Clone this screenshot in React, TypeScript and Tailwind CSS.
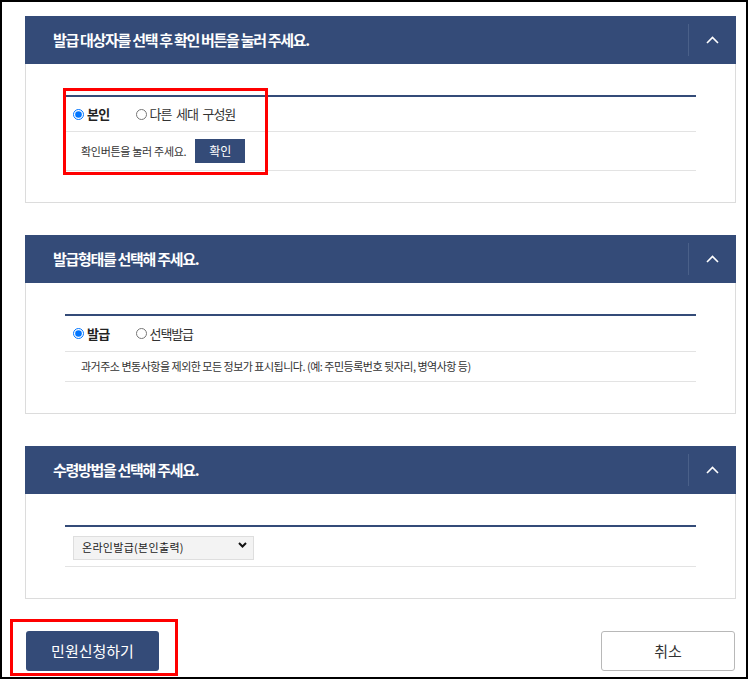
import { useState } from 'react';

const FONT = { fontFamily: '"Noto Sans CJK KR", "Noto Sans", sans-serif' };

function PanelHeader({ title }: { title: string }) {
  return (
    <div className="flex h-[48px] items-center bg-[#344b78]">
      <h2 className="flex-1 pl-[28px] text-[15px] font-bold tracking-[-1.3px] text-white">{title}</h2>
      <div className="h-[32px] w-px bg-[#4a6089]" />
      <button className="flex h-full w-[47px] items-center justify-center text-white">
        <svg width="13" height="8" viewBox="0 0 13 8" fill="none">
          <path d="M1 7L6.5 1.5L12 7" stroke="white" strokeWidth="1.6" />
        </svg>
      </button>
    </div>
  );
}

function Panel({ title, children }: { title: string; children: React.ReactNode }) {
  return (
    <section className="bg-white">
      <PanelHeader title={title} />
      <div className="border-x border-b border-[#dcdcdc] px-[39px] pt-[31px] pb-[31px]">
        <div className="border-t-2 border-[#344b78]">{children}</div>
      </div>
    </section>
  );
}

function Radio({ name, label, checked, onChange }: { name: string; label: string; checked: boolean; onChange: () => void }) {
  return (
    <label
      className={`flex items-center gap-[3px] text-[13px] ${
        checked ? 'font-bold tracking-[-0.7px] text-[#222]' : 'tracking-[-1.1px] text-[#333] [word-spacing:3px]'
      }`}
    >
      <input type="radio" name={name} checked={checked} onChange={onChange} className="m-0 h-[11px] w-[11px]" />
      {label}
    </label>
  );
}

export default function App() {
  const [target, setTarget] = useState('self');
  const [kind, setKind] = useState('all');

  return (
    <div className="relative h-[679px] w-[748px] border-2 border-black bg-white" style={FONT}>
      <div className="flex flex-col gap-[32px] pt-[14px] pl-[23px] pr-[10px]">
        <Panel title="발급 대상자를 선택 후 확인 버튼을 눌러 주세요.">
          <div className="flex h-[35px] items-center gap-[26px] border-b border-[#e3e3e3] pl-[8px]">
            <Radio name="target" label="본인" checked={target === 'self'} onChange={() => setTarget('self')} />
            <Radio name="target" label="다른 세대 구성원" checked={target === 'other'} onChange={() => setTarget('other')} />
          </div>
          <div className="flex h-[39px] items-center border-b border-[#e3e3e3] pl-[16px]">
            <span className="text-[11px] tracking-[-0.3px] text-[#333]">확인버튼을 눌러 주세요.</span>
            <button className="ml-[9px] h-[24px] w-[50px] bg-[#344b78] text-[12px] text-white">확인</button>
          </div>
        </Panel>

        <Panel title="발급형태를 선택해 주세요.">
          <div className="flex h-[36px] items-center gap-[26px] border-b border-[#e3e3e3] pl-[8px]">
            <Radio name="kind" label="발급" checked={kind === 'all'} onChange={() => setKind('all')} />
            <Radio name="kind" label="선택발급" checked={kind === 'pick'} onChange={() => setKind('pick')} />
          </div>
          <div className="flex h-[30px] items-center border-b border-[#e3e3e3] pl-[16px]">
            <span className="text-[11px] tracking-[-0.5px] text-[#333]">
              과거주소 변동사항을 제외한 모든 정보가 표시됩니다. (예: 주민등록번호 뒷자리, 병역사항 등)
            </span>
          </div>
        </Panel>

        <Panel title="수령방법을 선택해 주세요.">
          <div className="flex h-[40px] items-center border-b border-[#e3e3e3] pl-[8px]">
            <div className="relative">
              <select className="h-[24px] w-[181px] appearance-none border border-[#dedede] bg-[#f3f3f3] pl-[8px] text-[11px] tracking-[0.3px] text-[#222]">
                <option>온라인발급(본인출력)</option>
              </select>
              <svg className="pointer-events-none absolute top-[9px] right-[7px]" width="9" height="6" viewBox="0 0 9 6" fill="none">
                <path d="M1 1L4.5 4.5L8 1" stroke="#111" strokeWidth="2" />
              </svg>
            </div>
          </div>
        </Panel>
      </div>

      <div className="flex justify-between pt-[32px] pl-[24px] pr-[11px]">
        <button className="h-[40px] w-[133px] rounded-[3px] bg-[#344b78] text-[15px] text-white">민원신청하기</button>
        <button className="h-[40px] w-[134px] rounded-[3px] border border-[#b8b8b8] bg-white text-[15px] text-[#333]">취소</button>
      </div>

      {/* annotation boxes */}
      <div className="pointer-events-none absolute top-[86px] left-[61px] h-[87px] w-[205px] border-[3px] border-[#ff0000]" />
      <div className="pointer-events-none absolute top-[617px] left-[8px] h-[57px] w-[168px] border-[3px] border-[#ff0000]" />
    </div>
  );
}
